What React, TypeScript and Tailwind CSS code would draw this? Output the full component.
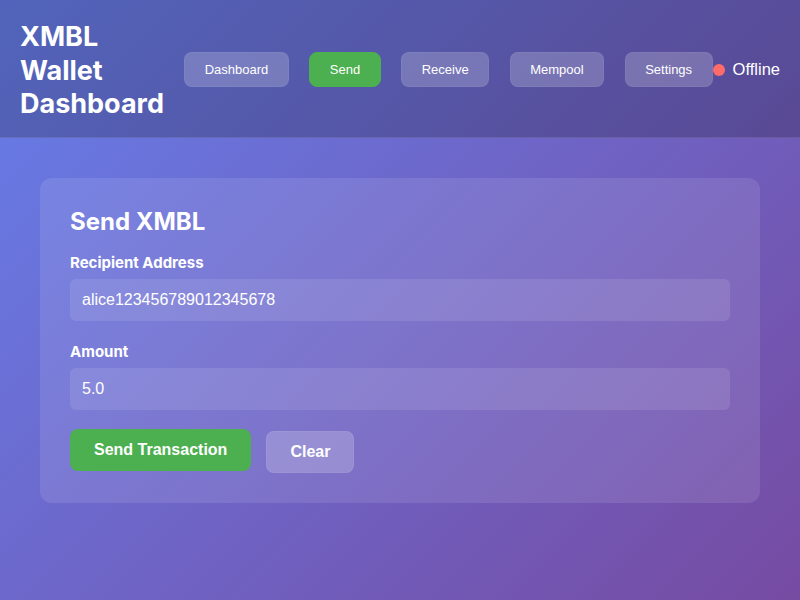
import { useState } from "react"

const navItems = ["Dashboard", "Send", "Receive", "Mempool", "Settings"]

const App = () => {
  const [active, setActive] = useState("Send")
  const [recipient, setRecipient] = useState("alice123456789012345678")
  const [amount, setAmount] = useState("5.0")

  return (
    <div
      className="min-h-screen w-full bg-[linear-gradient(135deg,#667eea_0%,#764ba2_100%)] text-white"
      style={{ fontFamily: "Inter, 'Liberation Sans', sans-serif" }}
    >
      {/* Header */}
      <header className="flex items-center justify-between bg-black/20 border-b border-white/10 pl-5 pr-5 pt-5 pb-4">
        <h1 className="w-[150px] text-[27px] leading-[33.5px] font-bold">XMBL Wallet Dashboard</h1>
        <div className="flex items-center mb-px">
          <nav className="flex items-center gap-[20.5px]">
            {navItems.map((item) => (
              <button
                key={item}
                onClick={() => setActive(item)}
                className={
                  item === active
                    ? "h-[35px] px-[19.5px] rounded-lg bg-[#4caf50] border border-[#4caf50] text-[13px] text-white"
                    : "h-[35px] px-[19.5px] rounded-lg bg-white/20 border border-white/5 text-[13px] text-white"
                }
                style={{ fontFamily: "'Liberation Sans', Arial, sans-serif" }}
              >
                {item}
              </button>
            ))}
          </nav>
          <div className="flex items-center gap-2">
            <span className="w-3 h-3 rounded-full bg-[#ff6b6b]" />
            <span className="text-[16.5px]" style={{ fontFamily: "'Liberation Sans', Arial, sans-serif" }}>
              Offline
            </span>
          </div>
        </div>
      </header>

      {/* Main */}
      <main className="p-10">
        <section className="rounded-xl bg-white/10 p-[30px]">
          <h2 className="text-[24px] leading-[1.2] font-bold mb-[18px]">Send XMBL</h2>

          <div className="mb-[22px]">
            <label className="block text-[15px] leading-[18px] font-bold mb-[7px]">Recipient Address</label>
            <input
              value={recipient}
              onChange={(e) => setRecipient(e.target.value)}
              className="w-full h-[42px] px-3 rounded-md bg-white/10 text-[16px] text-white outline-none"
              style={{ fontFamily: "'Liberation Sans', Arial, sans-serif" }}
            />
          </div>

          <div className="mb-[19px]">
            <label className="block text-[15px] leading-[18px] font-bold mb-[7px]">Amount</label>
            <input
              value={amount}
              onChange={(e) => setAmount(e.target.value)}
              className="w-full h-[42px] px-3 rounded-md bg-white/10 text-[16px] text-white outline-none"
              style={{ fontFamily: "'Liberation Sans', Arial, sans-serif" }}
            />
          </div>

          <div className="flex items-start gap-[15px]">
            <button
              className="h-[42px] px-6 rounded-lg bg-[#4caf50] text-[16px] font-bold text-white"
              style={{ fontFamily: "'Liberation Sans', Arial, sans-serif" }}
            >
              Send Transaction
            </button>
            <button
              onClick={() => {
                setRecipient("")
                setAmount("")
              }}
              className="mt-[2px] h-[42px] px-[23px] rounded-lg bg-white/20 border border-white/5 text-[16px] font-bold text-white"
              style={{ fontFamily: "'Liberation Sans', Arial, sans-serif" }}
            >
              Clear
            </button>
          </div>
        </section>
      </main>
    </div>
  )
}

export default App
